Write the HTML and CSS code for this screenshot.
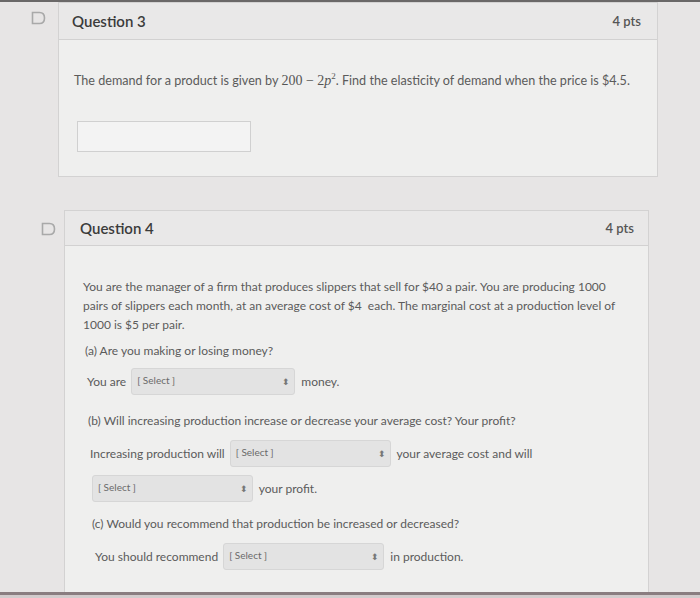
FILE: index.html
```html
<!DOCTYPE html>
<html>
<head>
<meta charset="utf-8">
<link rel="stylesheet" href="styles.css">
</head>
<body>
<div class="topbar"></div>
<div class="q q3">
  <div class="flag"><svg width="15" height="14" viewBox="0 0 15 14"><path d="M1.5 1.5 H8.5 Q13.5 1.5 13.5 7 Q13.5 12.5 8.5 12.5 H1.5 Z" fill="none" stroke="#a9a9a9" stroke-width="1.6"/></svg></div>
  <div class="card">
    <div class="head"><span class="title">Question 3</span><span class="pts">4 pts</span></div>
    <div class="body">
      <p class="text">The demand for a product is given by <span class="math">200 − 2<i>p</i><sup>2</sup></span>. Find the elasticity of demand when the price is $4.5.</p>
      <div class="answer"></div>
    </div>
  </div>
</div>
<div class="q q4">
  <div class="flag"><svg width="15" height="14" viewBox="0 0 15 14"><path d="M1.5 1.5 H8.5 Q13.5 1.5 13.5 7 Q13.5 12.5 8.5 12.5 H1.5 Z" fill="none" stroke="#a9a9a9" stroke-width="1.6"/></svg></div>
  <div class="card">
    <div class="head"><span class="title">Question 4</span><span class="pts">4 pts</span></div>
    <div class="body">
      <p class="para">You are the manager of a firm that produces slippers that sell for $40 a pair. You are producing 1000 pairs of slippers each month, at an average cost of $4&nbsp; each. The marginal cost at a production level of 1000 is $5 per pair.</p>
      <p class="sub a">(a) Are you making or losing money?</p>
      <div class="line la">You are <span class="sel w1">[ Select ]<span class="arr">⬍</span></span> money.</div>
      <p class="sub b">(b) Will increasing production increase or decrease your average cost? Your profit?</p>
      <div class="line lb">Increasing production will <span class="sel w2">[ Select ]<span class="arr">⬍</span></span> your average cost and will</div>
      <div class="line lc"><span class="sel w2">[ Select ]<span class="arr">⬍</span></span> your profit.</div>
      <p class="sub c">(c) Would you recommend that production be increased or decreased?</p>
      <div class="line ld">You should recommend <span class="sel w2">[ Select ]<span class="arr">⬍</span></span> in production.</div>
    </div>
  </div>
</div>
<div class="bottombar"></div>
</body>
</html>
```
FILE: styles.css
```css
html, body {
  margin: 0;
  padding: 0;
}
body {
  width: 700px;
  height: 598px;
  overflow: hidden;
  background: #e7e5e5;
  font-family: Lato, "Open Sans", sans-serif;
  color: #5b5b5b;
  position: relative;
}
.topbar {
  height: 2px;
  background: #6a6868;
}
.q {
  display: flex;
  align-items: flex-start;
}
.q3 {
  padding-left: 31px;
}
.q3 .flag {
  width: 27px;
  padding-top: 9px;
}
.q4 {
  margin-top: 33px;
  padding-left: 41px;
}
.q4 .flag {
  width: 23px;
  padding-top: 12px;
}
.flag svg {
  display: block;
}
.card {
  border: 1px solid #d3d2d2;
  background: #efefee;
}
.q3 .card {
  width: 598px;
}
.q4 .card {
  width: 583px;
}
.head {
  display: flex;
  justify-content: space-between;
  align-items: center;
  background: #e9e8e8;
  border-bottom: 1px solid #d2d1d1;
  padding: 0 16px 0 13px;
  color: #3b3b3b;
}
.q3 .head {
  height: 36px;
}
.q4 .head {
  height: 34px;
  padding-left: 15px;
  padding-right: 14px;
}
.title {
  font-size: 15px;
  font-weight: 600;
}
.pts {
  font-size: 13px;
  font-weight: 600;
  color: #555;
}
.body {
  padding-left: 15px;
}
.q3 .body {
  height: 136px;
  padding-top: 33px;
  box-sizing: border-box;
}
.text {
  margin: 0;
  font-size: 12.6px;
  line-height: 16px;
}
.math {
  font-family: "Liberation Serif", "DejaVu Serif", serif;
  font-size: 14px;
  color: #555;
}
.math sup {
  font-size: 9px;
  vertical-align: 6px;
  line-height: 0;
}
.answer {
  margin-top: 32px;
  margin-left: 3px;
  width: 172px;
  height: 29px;
  border: 1px solid #d0d0d0;
  background: #f3f3f3;
}
.q4 .body {
  height: 360px;
  padding-top: 31px;
  padding-left: 18px;
  box-sizing: border-box;
}
.para {
  margin: 0;
  font-size: 12px;
  line-height: 19px;
  width: 545px;
}
.sub {
  margin: 0;
  font-size: 12px;
  line-height: 16px;
}
.sub.a { margin-top: 9px; padding-left: 2px; }
.sub.b { margin-top: 18px; padding-left: 5px; }
.sub.c { margin-top: 14px; padding-left: 9px; }
.line {
  display: flex;
  align-items: center;
  font-size: 12px;
  white-space: pre;
}
.la { margin-top: 9px; padding-left: 4px; }
.lb { margin-top: 11px; padding-left: 7px; }
.lc { margin-top: 8px; padding-left: 9px; }
.ld { margin-top: 11px; padding-left: 12px; }
.sel {
  display: flex;
  align-items: center;
  justify-content: space-between;
  box-sizing: border-box;
  height: 27px;
  padding: 0 4px 3px 5px;
  margin: 0 3px 0 2px;
  background: #e3e3e3;
  border: 1px solid #d6d6d6;
  border-radius: 3px;
  font-size: 10px;
  color: #6a6a6a;
  align-self: center;
}
.sel .arr {
  font-size: 9px;
  color: #777;
  padding-top: 3px;
}
.w1 { width: 164px; }
.w2 { width: 161px; }
.lc .sel { margin-left: 0; }
.bottombar {
  position: absolute;
  left: 0;
  right: 0;
  top: 592px;
  height: 6px;
  background: #d2cbcc;
  border-top: 3px solid #8a7d80;
  box-sizing: border-box;
}
```
